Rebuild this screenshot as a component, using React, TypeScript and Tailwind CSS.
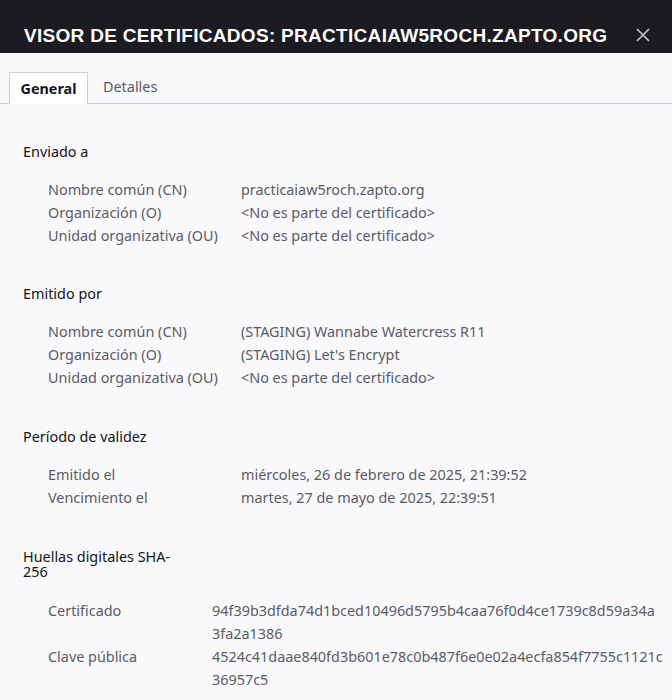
import React from "react";

const font = { fontFamily: '"Noto Sans", "Open Sans", sans-serif' };

function Row({ label, value }: { label: string; value: string }) {
  return (
    <div className="flex text-[14.4px] leading-[23px] text-[#5b5b66]">
      <div className="w-[193px] shrink-0">{label}</div>
      <div>{value}</div>
    </div>
  );
}

function Section({ title, rows }: { title: string; rows: [string, string][] }) {
  return (
    <div>
      <div className="text-[14.4px] leading-[23px] text-[#15141a]">{title}</div>
      <div className="mt-[15px] pl-[25px]">
        {rows.map(([l, v]) => (
          <Row key={l} label={l} value={v} />
        ))}
      </div>
    </div>
  );
}

export default function App() {
  return (
    <div className="w-[672px] h-[700px] overflow-hidden bg-[#f9f9fb]" style={font}>
      <div className="h-[53px] bg-[#1c1b22] flex items-end justify-between pl-[24px] pr-[22px] pb-[5px]">
        <div
          className="text-white uppercase font-bold text-[19px] leading-[24px] tracking-[0.3px]"
          style={{ fontFamily: '"Liberation Sans", Arial, sans-serif' }}
        >
          VISOR DE CERTIFICADOS: PRACTICAIAW5ROCH.ZAPTO.ORG
        </div>
        <svg width="14" height="14" viewBox="0 0 14 14" className="mb-[6px]">
          <path d="M1 1L13 13M13 1L1 13" stroke="#c8c8cc" strokeWidth="1.6" />
        </svg>
      </div>
      <div className="flex items-end pt-[19px] border-b border-[#cfcfd8] h-[51px]">
        <div className="w-[9px]" />
        <div className="h-[32px] w-[79px] bg-white border border-[#cfcfd8] border-b-0 -mb-px flex items-center justify-center text-[14.4px] font-bold text-[#15141a]">
          General
        </div>
        <div className="h-[32px] px-[15px] flex items-center text-[14.4px] text-[#5b5b66]">
          Detalles
        </div>
      </div>
      <div className="pl-[23px] pt-[36px]">
        <Section
          title="Enviado a"
          rows={[
            ["Nombre común (CN)", "practicaiaw5roch.zapto.org"],
            ["Organización (O)", "<No es parte del certificado>"],
            ["Unidad organizativa (OU)", "<No es parte del certificado>"],
          ]}
        />
        <div className="mt-[35px]">
          <Section
            title="Emitido por"
            rows={[
              ["Nombre común (CN)", "(STAGING) Wannabe Watercress R11"],
              ["Organización (O)", "(STAGING) Let's Encrypt"],
              ["Unidad organizativa (OU)", "<No es parte del certificado>"],
            ]}
          />
        </div>
        <div className="mt-[36px]">
          <Section
            title="Período de validez"
            rows={[
              ["Emitido el", "miércoles, 26 de febrero de 2025, 21:39:52"],
              ["Vencimiento el", "martes, 27 de mayo de 2025, 22:39:51"],
            ]}
          />
        </div>
        <div className="mt-[40px]">
          <div className="w-[160px] text-[14.4px] leading-[15px] text-[#15141a]">
            Huellas digitales SHA-256
          </div>
          <div className="mt-[20px] pl-[25px]">
            <div className="flex text-[14.4px] leading-[23px] text-[#5b5b66]">
              <div className="w-[164px] shrink-0">Certificado</div>
              <div className="w-[444px] break-all">
                94f39b3dfda74d1bced10496d5795b4caa76f0d4ce1739c8d59a34a3fa2a1386
              </div>
            </div>
            <div className="flex text-[14.4px] leading-[23px] text-[#5b5b66]">
              <div className="w-[164px] shrink-0">Clave pública</div>
              <div className="w-[452px] break-all">
                4524c41daae840fd3b601e78c0b487f6e0e02a4ecfa854f7755c1121c36957c5
              </div>
            </div>
          </div>
        </div>
      </div>
    </div>
  );
}
